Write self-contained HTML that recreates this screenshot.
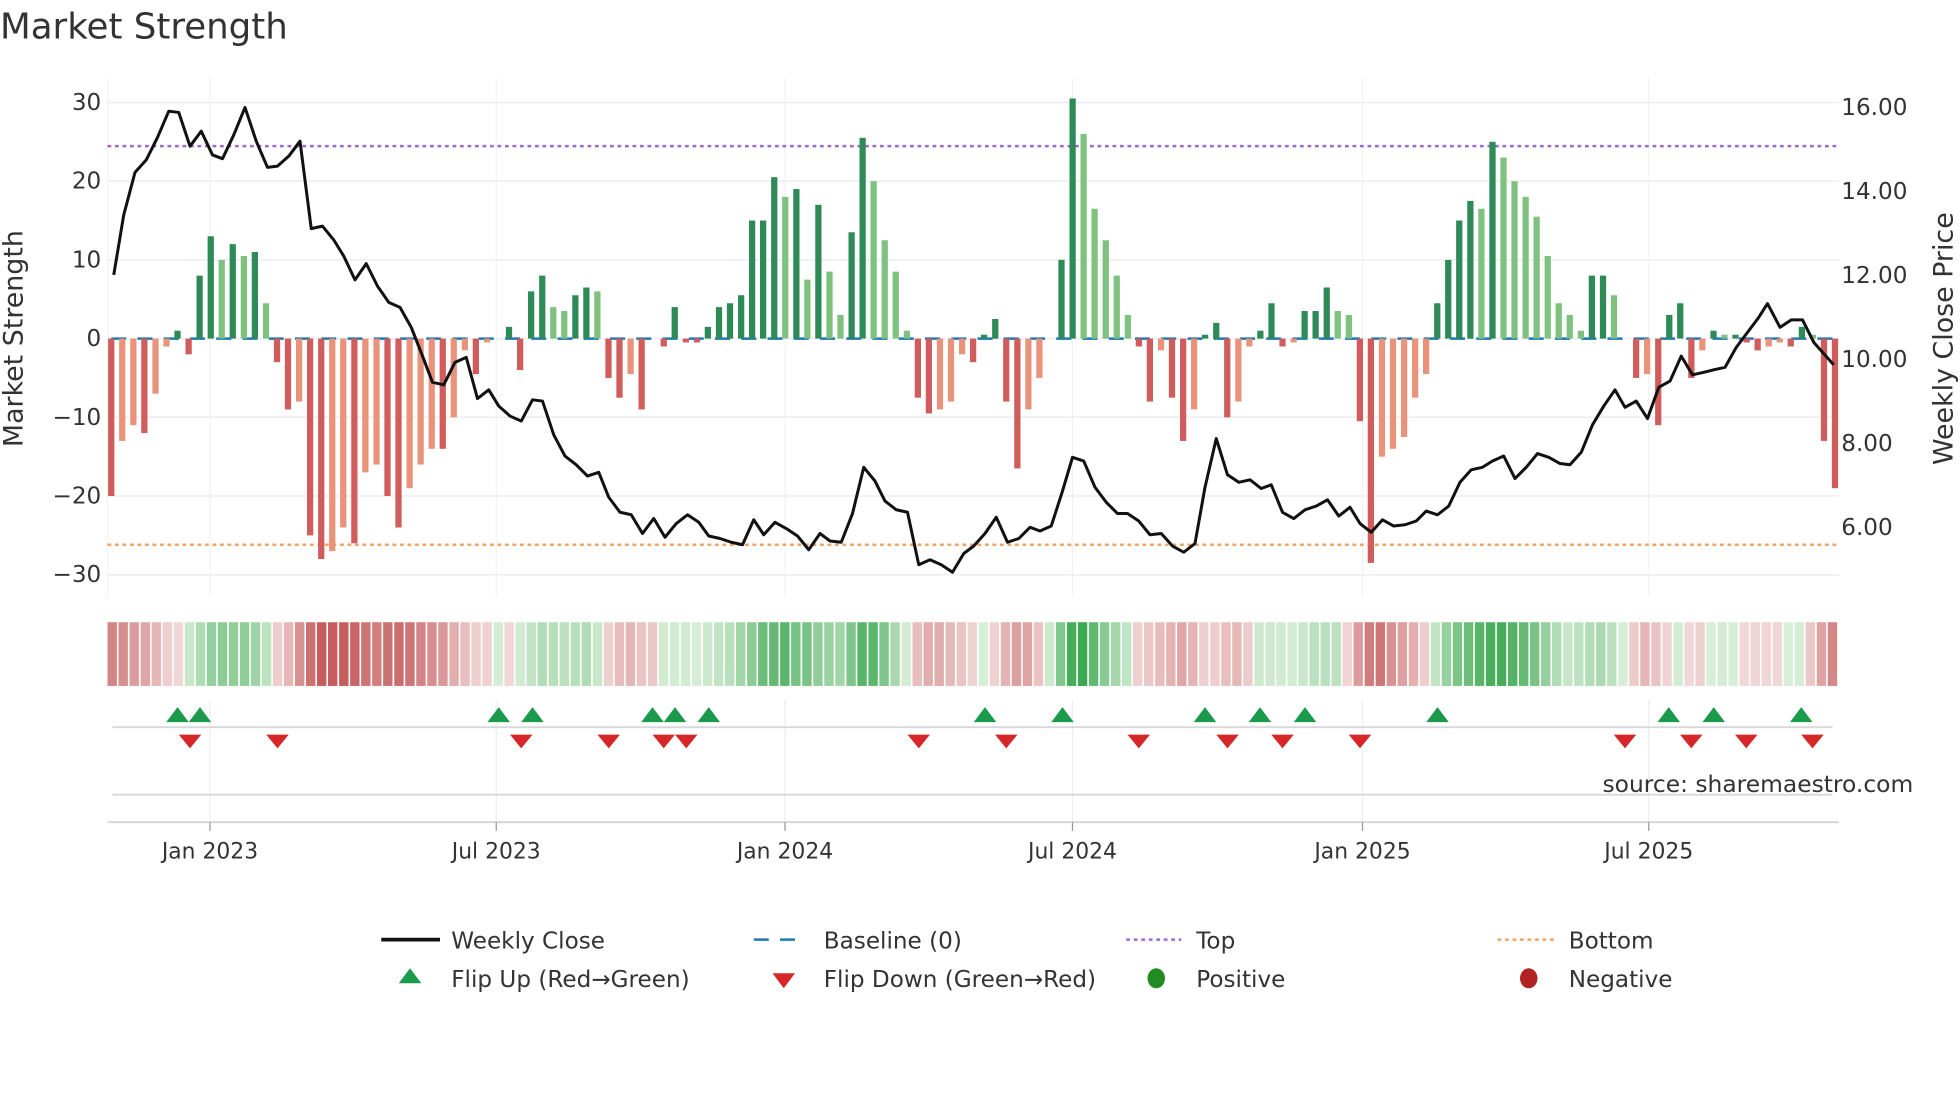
<!DOCTYPE html>
<html><head><meta charset="utf-8"><style>
html,body{margin:0;padding:0;background:#fff;width:1960px;height:1102px;overflow:hidden}
svg{display:block}
text{font-family:"DejaVu Sans","Liberation Sans",sans-serif;fill:#333}
</style></head><body>
<svg id="s" width="1960" height="1102" viewBox="0 0 1568 882" preserveAspectRatio="none" xmlns="http://www.w3.org/2000/svg">
<text x="0" y="31" font-size="28.5" fill="#333">Market Strength</text>
<g id="g"></g>
<text x="12" y="271" font-size="21.5" transform="rotate(-90 12 271)" text-anchor="middle" dominant-baseline="middle">Market Strength</text>
<text x="1556" y="271" font-size="21.5" transform="rotate(-90 1556 271)" text-anchor="middle" dominant-baseline="middle">Weekly Close Price</text>
<text x="1282" y="634" font-size="18.7" fill="#999">source: sharemaestro.com</text>
<g font-size="18.5">
<line x1="305" y1="752" x2="352" y2="752" stroke="#111" stroke-width="3"/><text x="361" y="759">Weekly Close</text>
<line x1="603" y1="752" x2="645" y2="752" stroke="#1f77b4" stroke-width="2" stroke-dasharray="12,9"/><text x="659" y="759">Baseline (0)</text>
<line x1="901" y1="752" x2="945" y2="752" stroke="#9b6ad8" stroke-width="2" stroke-dasharray="3,3"/><text x="957" y="759">Top</text>
<line x1="1198" y1="752" x2="1243" y2="752" stroke="#f4a460" stroke-width="2" stroke-dasharray="3,3"/><text x="1255" y="759">Bottom</text>
<polygon points="328,775 337,787 319,787" fill="#1a9a4a"/><text x="361" y="790">Flip Up (Red→Green)</text>
<polygon points="618,779 636,779 627,791" fill="#d62728"/><text x="659" y="790">Flip Down (Green→Red)</text>
<ellipse cx="925" cy="783" rx="7" ry="8" fill="#228b22"/><text x="957" y="790">Positive</text>
<ellipse cx="1223" cy="783" rx="7" ry="8" fill="#b22222"/><text x="1255" y="790">Negative</text>
</g>
</svg>
<script>
var V=[-20,-13,-11,-12,-7,-1,1,-2,8,13,10,12,10.5,11,4.5,-3,-9,-8,-25,-28,-27,-24,-26,-17,-16,-20,-24,-19,-16,-14,-14,-10,-1.5,-4.5,-0.5,0,1.5,-4,6,8,4,3.5,5.5,6.5,6,-5,-7.5,-4.5,-9,0,-1,4,-0.5,-0.5,1.5,4,4.5,5.5,15,15,20.5,18,19,7.5,17,8.5,3,13.5,25.5,20,12.5,8.5,1,-7.5,-9.5,-9,-8,-2,-3,0.5,2.5,-8,-16.5,-9,-5,0,10,30.5,26,16.5,12.5,8,3,-1,-8,-1.5,-7.5,-13,-9,0.5,2,-10,-8,-1,1,4.5,-1,-0.5,3.5,3.5,6.5,3.5,3,-10.5,-28.5,-15,-14,-12.5,-7.5,-4.5,4.5,10,15,17.5,16.5,25,23,20,18,15.5,10.5,4.5,3,1,8,8,5.5,0,-5,-4.5,-11,3,4.5,-5,-1.5,1,0.5,0.5,-0.5,-1.5,-1,-0.5,-1,1.5,0.5,-13,-19];
var P=[[91,220],[99,172],[108,138],[117,128],[126,110],[135,89],[143,90],[152,117],[161,105],[170,124],[178,127],[187,108],[196,86],[205,113],[214,134],[222,133],[231,125],[240,113],[249,183],[258,181],[267,192],[275,205],[284,224],[293,211],[302,229],[311,242],[320,246],[329,262],[338,285],[346,306],[355,308],[364,290],[373,286],[382,319],[391,312],[399,325],[408,333],[417,337],[426,320],[434,321],[443,348],[452,365],[461,372],[470,381],[479,378],[487,398],[496,410],[505,412],[514,427],[523,415],[532,430],[541,419],[550,412],[559,418],[567,429],[576,431],[585,434],[594,436],[603,416],[611,428],[620,418],[629,423],[638,429],[647,440],[656,427],[664,433],[673,434],[682,411],[691,374],[700,385],[708,401],[717,408],[726,410],[735,452],[744,448],[753,452],[762,458],[771,443],[779,437],[788,427],[797,414],[806,434],[815,431],[824,422],[832,425],[841,421],[850,393],[858,366],[867,369],[876,390],[885,402],[894,411],[902,411],[911,417],[920,428],[929,427],[938,437],[947,442],[956,435],[964,390],[973,351],[982,380],[991,386],[1000,384],[1009,391],[1017,388],[1026,410],[1035,415],[1044,408],[1053,405],[1062,400],[1071,413],[1080,406],[1088,419],[1097,426],[1106,416],[1115,421],[1124,420],[1133,417],[1141,409],[1150,412],[1159,405],[1168,386],[1177,376],[1186,374],[1194,369],[1203,365],[1212,383],[1221,374],[1230,363],[1239,366],[1248,371],[1256,372],[1265,362],[1274,340],[1283,325],[1292,312],[1300,326],[1309,321],[1318,335],[1327,310],[1336,305],[1345,285],[1354,300],[1363,298],[1371,296],[1380,294],[1389,278],[1398,266],[1407,254],[1414,243],[1424,262],[1433,256],[1442,256],[1451,274],[1459,283],[1467,292]];
var h='';
function L(x1,y1,x2,y2,c,w,d){h+='<line x1="'+x1+'" y1="'+y1+'" x2="'+x2+'" y2="'+y2+'" stroke="'+c+'" stroke-width="'+w+'"'+(d?' stroke-dasharray="'+d+'"':'')+'/>';}
function T(x,y,s,a,fs){h+='<text x="'+x+'" y="'+y+'" font-size="'+(fs||17)+'" text-anchor="'+a+'">'+s+'</text>';}
var dx=[168,397,628,858,1090,1319];
dx.forEach(function(x){L(x,62,x,478,'#f0f2f5',1);L(x,560,x,658,'#eceef2',1);});
[30,20,10,0,-10,-20,-30].forEach(function(v){var y=271-v*6.3;L(86,y,1471,y,'#eceef2',1.2);T(81,y+6,String(v).replace('-','−'),'end',18.5);});
[16,14,12,10,8,6].forEach(function(p){var y=422-(p-6)*33.6;T(1473,y+6,p.toFixed(2),'start',18.5);});
L(86,62,86,478,'#f3f3f3',1);
L(89,271,1468,271,'#1f77b4',2,'12,9');
L(86,117,1471,117,'#9b6ad8',2,'3,3');
L(86,436,1471,436,'#f4a460',2,'3,3');
var N=V.length,sp=(1468-89)/(N-1);
for(var i=0;i<N;i++){var v=V[i],p=i?V[i-1]:0,x=89+i*sp,c;
 if(v>=0)c=v>=p?'#2e8b57':'#7fc27f';else c=v<=p?'#d05c5c':'#e8937a';
 var y0=271,y1=271-v*6.3;h+='<rect x="'+(x-2.5).toFixed(1)+'" y="'+Math.min(y0,y1).toFixed(1)+'" width="5" height="'+Math.abs(y1-y0).toFixed(1)+'" fill="'+c+'"/>';}
h+='<polyline fill="none" stroke="#111" stroke-width="2.4" stroke-linejoin="round" points="'+P.map(function(q){return q.join(',')}).join(' ')+'"/>';
for(var i=0;i<N;i++){var s=0,n=0;for(var k=-1;k<=1;k++){if(V[i+k]!==undefined){s+=V[i+k];n++;}}s=s/n;var t=Math.min(1,Math.abs(s)/24);var c;
 if(s>=0){c='rgb('+Math.round(215-155*t)+','+Math.round(238-70*t)+','+Math.round(215-135*t)+')';}
 else{c='rgb('+Math.round(242-45*t)+','+Math.round(218-125*t)+','+Math.round(218-125*t)+')';}
 var x=86+i*(1471-86)/N;h+='<rect x="'+x.toFixed(1)+'" y="498" width="'+((1471-86)/N-1.3).toFixed(2)+'" height="51" fill="'+c+'"/>';}
L(90,582,1466,582,'#d8d8d8',1.5);L(90,636,1466,636,'#d8d8d8',1.5);L(86,658,1471,658,'#d4d4d4',1.5);
dx.forEach(function(x){L(x,658,x,665,'#999',1);});
[142,160,399,426,522,540,567,788,850,964,1008,1044,1150,1335,1371,1441].forEach(function(x){h+='<polygon points="'+x+',566 '+(x+9)+',578 '+(x-9)+',578" fill="#1a9a4a"/>';});
[152,222,417,487,531,549,735,805,911,982,1026,1088,1300,1353,1397,1450].forEach(function(x){h+='<polygon points="'+(x-9)+',588 '+(x+9)+',588 '+x+',599" fill="#d62728"/>';});
['Jan 2023','Jul 2023','Jan 2024','Jul 2024','Jan 2025','Jul 2025'].forEach(function(s,i){T(dx[i],687,s,'middle',17.5);});
document.getElementById('g').innerHTML=h;
</script>
</body></html>
